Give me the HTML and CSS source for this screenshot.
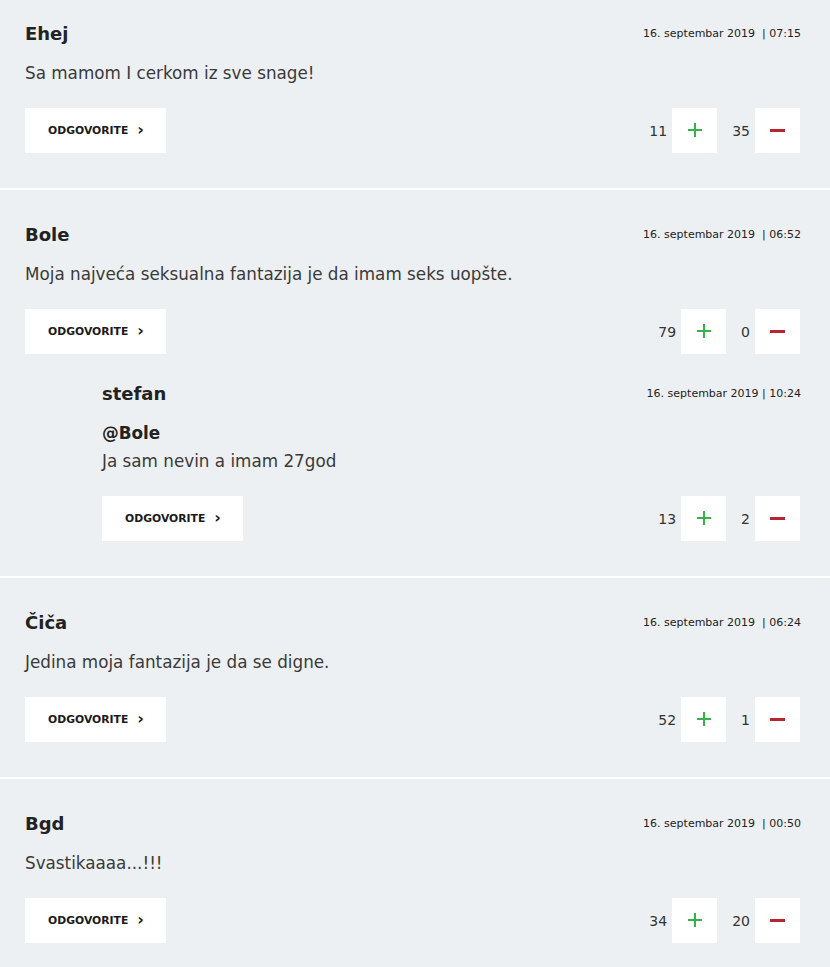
FILE: index.html
```html
<!DOCTYPE html>
<html lang="sr">

<head>
  <meta charset="UTF-8">
  <meta name="viewport" content="width=device-width, initial-scale=1.0">
  <title>Komentari</title>
  <link rel="stylesheet" href="styles.css">
</head>

<body>
  <ul class="comments">
    <li class="comment">
      <div class="head">
        <span class="name">Ehej</span>
        <span class="date">16. septembar 2019&nbsp; | 07:15</span>
      </div>
      <p class="text">Sa mamom I cerkom iz sve snage!</p>
      <div class="actions">
        <a href="javascript:;" class="reply">ODGOVORITE <i class="arrow">›</i></a>
        <div class="votes">
          <span class="count">11</span>
          <a href="javascript:;" class="vote up"></a>
          <span class="count">35</span>
          <a href="javascript:;" class="vote down"></a>
        </div>
      </div>
    </li>

    <li class="comment">
      <div class="head">
        <span class="name">Bole</span>
        <span class="date">16. septembar 2019&nbsp; | 06:52</span>
      </div>
      <p class="text">Moja najveća seksualna fantazija je da imam seks uopšte.</p>
      <div class="actions">
        <a href="javascript:;" class="reply">ODGOVORITE <i class="arrow">›</i></a>
        <div class="votes">
          <span class="count">79</span>
          <a href="javascript:;" class="vote up"></a>
          <span class="count">0</span>
          <a href="javascript:;" class="vote down"></a>
        </div>
      </div>

      <div class="answer">
        <div class="head">
          <span class="name">stefan</span>
          <span class="date">16. septembar 2019 | 10:24</span>
        </div>
        <p class="text"><b>@Bole</b><br>Ja sam nevin a imam 27god</p>
        <div class="actions">
          <a href="javascript:;" class="reply">ODGOVORITE <i class="arrow">›</i></a>
          <div class="votes">
            <span class="count">13</span>
            <a href="javascript:;" class="vote up"></a>
            <span class="count">2</span>
            <a href="javascript:;" class="vote down"></a>
          </div>
        </div>
      </div>
    </li>

    <li class="comment">
      <div class="head">
        <span class="name">Čiča</span>
        <span class="date">16. septembar 2019&nbsp; | 06:24</span>
      </div>
      <p class="text">Jedina moja fantazija je da se digne.</p>
      <div class="actions">
        <a href="javascript:;" class="reply">ODGOVORITE <i class="arrow">›</i></a>
        <div class="votes">
          <span class="count">52</span>
          <a href="javascript:;" class="vote up"></a>
          <span class="count">1</span>
          <a href="javascript:;" class="vote down"></a>
        </div>
      </div>
    </li>

    <li class="comment">
      <div class="head">
        <span class="name">Bgd</span>
        <span class="date">16. septembar 2019&nbsp; | 00:50</span>
      </div>
      <p class="text">Svastikaaaa...!!!</p>
      <div class="actions">
        <a href="javascript:;" class="reply">ODGOVORITE <i class="arrow">›</i></a>
        <div class="votes">
          <span class="count">34</span>
          <a href="javascript:;" class="vote up"></a>
          <span class="count">20</span>
          <a href="javascript:;" class="vote down"></a>
        </div>
      </div>
    </li>
  </ul>
</body>

</html>
```

FILE: styles.css
```css
body {
  margin: 0;
  background-color: #edf0f2;
  font-family: "DejaVu Sans", "Noto Sans", sans-serif;
  color: #333;
}

a {
  text-decoration: none;
}

ul {
  padding: 0;
  margin: 0;
  list-style: none;
}

p {
  margin: 0;
}

.comment {
  padding: 32px 30px 35px 25px;
  border-top: 2px solid #fff;
}

.comment:first-child {
  padding-top: 21px;
  border-top: 0;
}

.head {
  display: flex;
  justify-content: space-between;
  align-items: center;
  height: 24px;
}

.head .name {
  font-size: 18px;
  font-weight: bold;
  color: #222;
}

.head .date {
  font-size: 11px;
  color: #222;
  margin-right: -1px;
}

.text {
  margin-top: 14px;
  font-size: 16.8px;
  line-height: 28px;
  color: #3a3a3a;
}

.text b {
  color: #222;
}

.actions {
  display: flex;
  justify-content: space-between;
  align-items: center;
  margin-top: 21px;
}

.reply {
  display: flex;
  align-items: center;
  width: 141px;
  height: 45px;
  box-sizing: border-box;
  padding-left: 23px;
  background-color: #fff;
  font-size: 10.8px;
  font-weight: bold;
  color: #1a1a1a;
}

.reply .arrow {
  font-style: normal;
  font-size: 16px;
  margin-left: 9px;
  margin-top: -2px;
}

.votes {
  display: flex;
  align-items: center;
}

.votes .count {
  font-size: 14px;
  color: #333;
  margin-right: 5px;
}

.vote {
  position: relative;
  display: block;
  width: 45px;
  height: 45px;
  background-color: #fff;
}

.vote.up {
  margin-right: 15px;
}

.vote::before,
.vote::after {
  position: absolute;
  content: "";
  display: block;
}

.vote.up::before {
  left: 16px;
  top: 21px;
  width: 14px;
  height: 2px;
  background-color: #35b24a;
}

.vote.up::after {
  left: 22px;
  top: 15px;
  width: 2px;
  height: 14px;
  background-color: #35b24a;
}

.vote.down::before {
  left: 15px;
  top: 21px;
  width: 15px;
  height: 3px;
  background-color: #b82430;
}

.answer {
  margin-top: 27px;
  padding-left: 77px;
}
```
